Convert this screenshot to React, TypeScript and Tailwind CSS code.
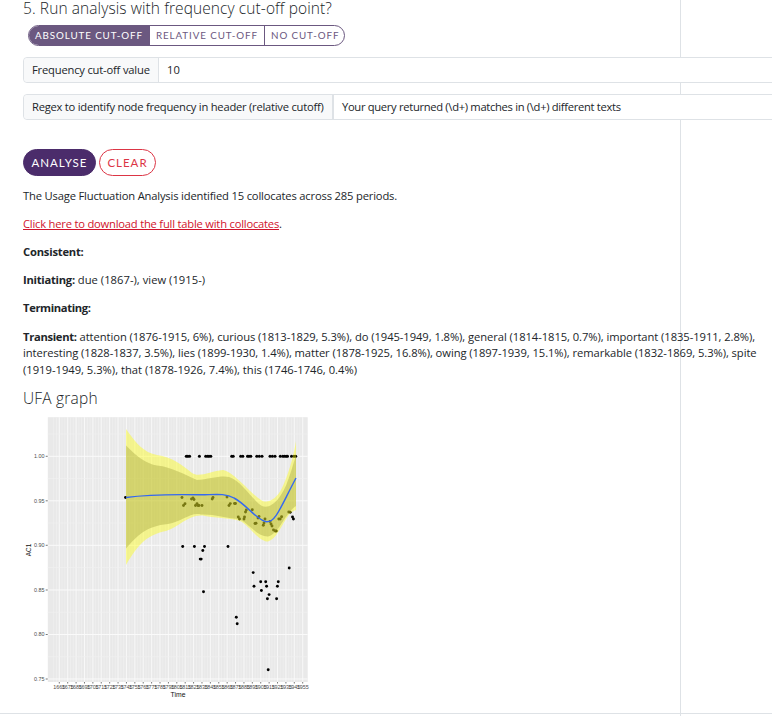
import React from 'react';

const AREA_X0 = 47.8, AREA_X1 = 307.7;
const years = Array.from({ length: 30 }, (_, i) => 1665 + i * 10);
const yTicks = [['1.00', 456.3], ['0.95', 500.8], ['0.90', 545.3], ['0.85', 590], ['0.80', 634.5], ['0.75', 679]] as const;
const yMinor = [434, 478.5, 523, 567.6, 612.2, 656.8];

/* Observations beneath the confidence bands, then the ones outside. */
const banded = [
  [182, 497.5], [183.5, 505.5], [185, 503.7], [191.5, 499], [193, 498], [194, 499.5], [195.5, 505.5], [197, 503.6], [198, 505.5], [199, 505.5], [202, 505.5], [212.2, 499], [213, 497.5], [227, 497], [229, 505.5], [230.3, 503.6], [234.5, 503.5], [235.5, 503.5],
  [238.3, 517], [239.5, 519], [244, 519], [244.5, 517], [245.5, 512], [246.3, 510], [252.3, 509.8], [255, 523.5], [256, 523.3], [258, 518], [259, 516.5], [263.3, 525.3], [264, 523], [265, 519], [270, 521.5], [271, 524], [272, 526], [273.5, 530], [275.3, 531], [276.3, 531], [278.8, 519], [280.2, 519], [281.6, 516.8], [288.8, 512], [290.2, 512.3],
];
const outside = [
  [182.7, 546.5], [194.4, 546.5], [204.5, 546.5], [202.8, 550.5], [200.2, 559.1], [201.2, 559.1], [228, 546.5], [203.5, 591.8], [236.3, 617.3], [237.2, 623.8], [268.2, 669.8], [253.2, 572.6], [254, 586.2], [260.7, 581.7], [261.4, 590.5], [265.7, 581.7], [266.6, 586.2], [267.4, 598.7], [269.1, 594.6], [276.6, 598.7], [277.4, 586.2], [278.3, 581.7], [289.2, 568], [292.5, 517], [293.4, 519],
];
const topRow = [186.3, 187.8, 189.6, 199.4, 205.7, 207.5, 209, 210.8, 231.7, 233.2, 240.7, 242.8, 247.5, 249, 250.8, 256.8, 259.3, 262, 270, 272.4, 275, 280.3, 282.8, 284.5, 286.2, 287.5, 291.5, 294, 295.7];

function UfaGraph() {
  return (
    <svg className="block" width="290" height="286" viewBox="20 416 290 286" fontFamily="'Liberation Sans', Arial, sans-serif">
      <rect x={AREA_X0} y="417.2" width={AREA_X1 - AREA_X0} height="264.8" fill="#e9e9e9" />
      <g stroke="#f1f1f1">
        {years.map((y, i) => (
          <g key={y} strokeWidth=".65">
            <path d={`M${56.5 + i * 8.393} 417.2V682M${53.7 + i * 8.393} 417.2V682`} />
            <path d={`M${59.3 + i * 8.393} 417.2V682`} stroke="#f8f8f8" strokeWidth="1" />
          </g>
        ))}
        {yMinor.map(y => <path key={y} d={`M${AREA_X0} ${y}H${AREA_X1}`} strokeWidth=".7" />)}
        {yTicks.map(([t, y]) => <path key={t} d={`M${AREA_X0} ${y}H${AREA_X1}`} stroke="#fafafa" />)}
      </g>
      <g fill="#000">
        {topRow.map(x => <circle key={x} cx={x} cy="456.3" r="1.5" />)}
        {[...banded, ...outside, [125.5, 497.5]].map(([x, y], i) => <circle key={i} cx={x} cy={y} r="1.45" />)}
      </g>
      <path fill="#ffff00" fillOpacity=".4" d="M126 429C135 442 144 453 157 455C172 457 181 464 192 473C199 478 211 471 223 470C234 472 249 492 261 500C267 504 276 500 282 488C288 476 294 455 296 441V510C285 512 280 538 268 541.5C259 542 249 525 240 521C231 518 217 518 205 516C189 513 180 527 166 531C146 535 138 545 126 565Z" />
      <path fill="#999933" fillOpacity=".35" d="M126 445.5C137 457 147 464 157 465.5C172 467 185 475 197 480C209 479 221 475 229 477C241 480 253 501 262 506C272 510 282 496 287 483C291 472 294 462 296 455V506C285 513 279 534 268 536.5C257 537 247 521 238 519C226 518 214 514 201 514.5C190 512 182 522 168 524C146 526 137 536 126 548.5Z" />
      <path d="M126 497.5C152 494 174 494.3 200 494.8C212 495 225 492.5 234 498C246 504 258 521.5 266.8 521.8C276 522 281 506 296 478" fill="none" stroke="#3468f0" strokeWidth="1.4" />
      <g fill="#4d4d4d" fontSize="5.4">
        {yTicks.map(([t, y]) => <g key={t}><text x="44.5" y={y + 1.9} textAnchor="end">{t}</text><path d={`M45.7 ${y}h2`} stroke="#555" strokeWidth=".8" /></g>)}
        {years.map((y, i) => <g key={y}><text x={59.3 + i * 8.393} y="689.3" textAnchor="middle">{y}</text><path d={`M${59.3 + i * 8.393} 682v1.5`} stroke="#555" strokeWidth=".8" /></g>)}
      </g>
      <text x="178" y="697" textAnchor="middle" fontSize="6.8" fill="#111">Time</text>
      <text transform="translate(31 550) rotate(-90)" textAnchor="middle" fontSize="6.4" fill="#111">AC1</text>
    </svg>
  );
}

function Field({ label, value, labelClass, valueClass }: { label: string; value: string; labelClass: string; valueClass: string }) {
  return (
    <div className="relative flex h-[26px] w-[900px] rounded border border-[#dee2e6] bg-white text-[11.2px]">
      <div className={`flex shrink-0 items-center whitespace-nowrap rounded-l border-r border-[#dee2e6] bg-[#f8f9fa] pl-[8px] ${labelClass}`}>{label}</div>
      <div className={`flex items-center whitespace-nowrap pl-[8px] ${valueClass}`}>{value}</div>
    </div>
  );
}

export default function App() {
  return (
    <div className="relative h-[716px] w-[772px] overflow-hidden bg-white font-['Open_Sans',sans-serif] text-[11.2px] leading-[16.3px] text-[#212529]">
      <div className="absolute left-[680px] top-0 h-[716px] w-px bg-[#dee2e6]" />
      <div className="relative flex h-[714px] flex-col items-start border-b border-[#dee2e6] pl-[23px]">
        <h2 className="h-[25px] whitespace-nowrap text-[15.5px] font-light leading-[17px] tracking-[0.09px]">5. Run analysis with frequency cut-off point?</h2>
        <div className="ml-[5px] flex h-[21px] overflow-hidden rounded-full border border-[#6b5880] font-['Lato',sans-serif] text-[9.8px] leading-[19px] tracking-[0.9px] text-[#6b5880]">
          <span className="w-[121px] whitespace-nowrap bg-[#6b5880] pl-[6px] text-white">ABSOLUTE CUT-OFF</span>
          <span className="w-[115px] whitespace-nowrap border-r border-[#6b5880] pl-[6px]">RELATIVE CUT-OFF</span>
          <span className="w-[79px] whitespace-nowrap pl-[6px]">NO CUT-OFF</span>
        </div>
        <div className="mt-[11px] flex flex-col gap-[11px]">
          <Field label="Frequency cut-off value" value="10" labelClass="w-[135px] tracking-[-0.19px]" valueClass="" />
          <Field label="Regex to identify node frequency in header (relative cutoff)" value="Your query returned (\d+) matches in (\d+) different texts" labelClass="w-[310px] border-r-2 tracking-[-0.24px]" valueClass="tracking-[-0.31px]" />
        </div>
        <div className="mt-[29px] flex gap-[3px] font-['Lato',sans-serif] text-[11.5px] leading-[25px] tracking-[1px]">
          <button className="h-[27px] w-[73px] rounded-full border border-[#4b2c6b] bg-[#4b2c6b] text-white">ANALYSE</button>
          <button className="h-[27px] w-[57px] rounded-full border border-[#dc3545] text-[#dc3545]">CLEAR</button>
        </div>
        <div className="mt-[12px] flex flex-col gap-[11.8px] whitespace-nowrap">
          <p className="tracking-[-0.17px]">The Usage Fluctuation Analysis identified 15 collocates across 285 periods.</p>
          <p className="tracking-[-0.21px]"><a className="text-[#d0142c] underline">Click here to download the full table with collocates</a>.</p>
          <p className="tracking-[-0.2px]"><b>Consistent:</b></p>
          <p className="tracking-[0.03px]"><b className="tracking-[-0.25px]">Initiating:</b> due (1867-), view (1915-)</p>
          <p className="tracking-[-0.35px]"><b>Terminating:</b></p>
          <div className="mt-[0.6px]">
            <p className="tracking-[-0.06px]"><b className="tracking-[-0.3px]">Transient:</b> attention (1876-1915, 6%), curious (1813-1829, 5.3%), do (1945-1949, 1.8%), general (1814-1815, 0.7%), important (1835-1911, 2.8%),</p>
            <p className="tracking-[-0.06px]">interesting (1828-1837, 3.5%), lies (1899-1930, 1.4%), matter (1878-1925, 16.8%), owing (1897-1939, 15.1%), remarkable (1832-1869, 5.3%), spite</p>
            <p>(1919-1949, 5.3%), that (1878-1926, 7.4%), this (1746-1746, 0.4%)</p>
          </div>
        </div>
        <h2 className="mt-[10.2px] h-[28px] text-[15.5px] font-light leading-[20px] tracking-[0.2px]">UFA graph</h2>
        <div className="-ml-[3px]"><UfaGraph /></div>
      </div>
    </div>
  );
}
